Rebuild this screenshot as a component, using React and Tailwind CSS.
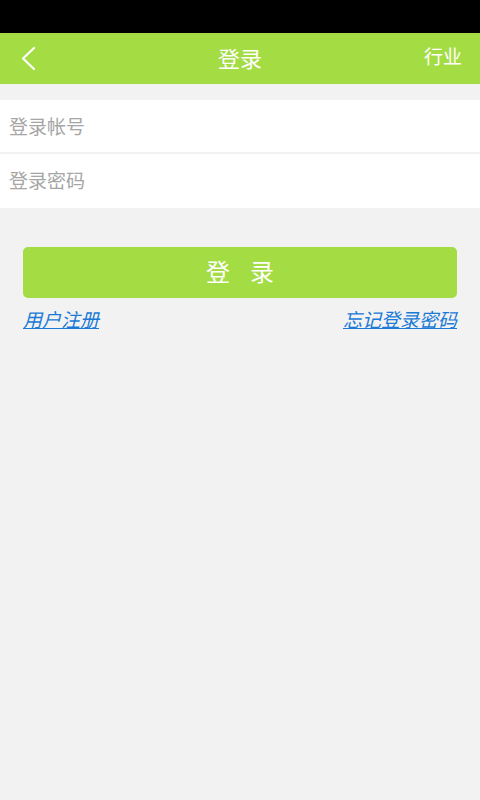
export default function App() {
    const font = { fontFamily: '"Noto Sans CJK SC", "Noto Sans", sans-serif' };

    return (
        <div className="min-h-[800px] bg-[#f2f2f2]" style={font}>
            <div className="h-[33px] bg-black" />
            <div className="relative flex h-[51px] items-center justify-center bg-[#a4dc43]">
                <svg className="absolute left-[20px] top-[13px]" width="18" height="26" viewBox="0 0 18 26">
                    <path d="M14 2 L3 12.5 L14 23" fill="none" stroke="white" strokeWidth="2.2" strokeLinecap="round" strokeLinejoin="round" />
                </svg>
                <span className="pb-[4px] text-[22px] leading-none text-white">登录</span>
                <span className="absolute right-[18px] top-[13px] text-[19px] leading-none text-white">行业</span>
            </div>

            <div className="mt-[16px] flex flex-col gap-[2px]">
                <div className="flex h-[52px] items-center bg-white px-[9px]">
                    <span className="text-[19px] text-[#a6a6a6]">登录帐号</span>
                </div>
                <div className="flex h-[54px] items-center bg-white px-[9px] pb-[2px]">
                    <span className="text-[19px] text-[#a6a6a6]">登录密码</span>
                </div>
            </div>

            <div className="px-[23px] pt-[39px]">
                <button className="flex h-[51px] w-full items-center justify-center rounded-[5px] bg-[#a4dc43] pb-[3px] text-[24px] tracking-[20px] text-white">
                    <span className="pl-[20px]">登录</span>
                </button>
                <div className="mt-[11px] flex justify-between text-[19px] italic leading-none text-[#1a7ad6] underline">
                    <span>用户注册</span>
                    <span>忘记登录密码</span>
                </div>
            </div>
        </div>
    );
}
